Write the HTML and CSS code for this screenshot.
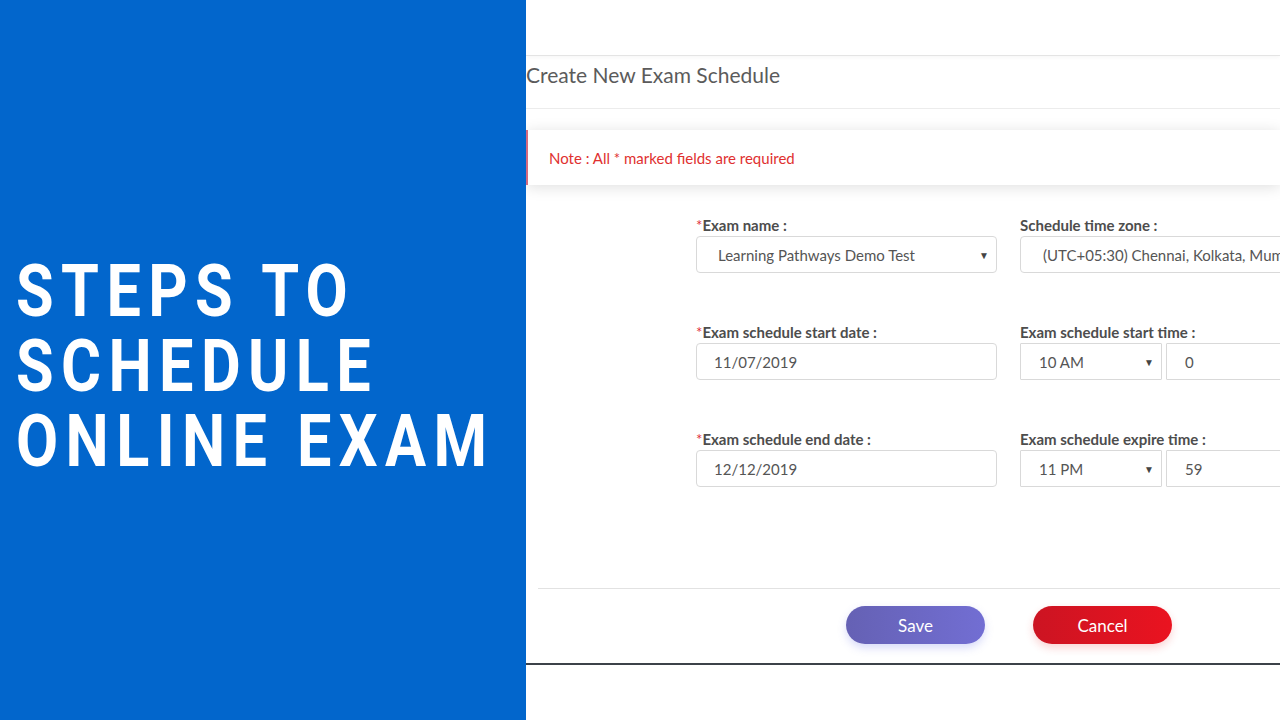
FILE: index.html
```html
<!DOCTYPE html>
<html lang="en">
<head>
<meta charset="utf-8">
<title>Steps to schedule online exam</title>
<link rel="stylesheet" href="styles.css">
</head>
<body>
<div class="page">
  <section class="intro">
    <h1 class="intro-title"><span>STEPS TO</span><span>SCHEDULE</span><span>ONLINE EXAM</span></h1>
  </section>
  <section class="app">
    <div class="screen">
      <div class="topbar"></div>
      <div class="page-head">Create New Exam Schedule</div>
      <div class="note-wrap">
        <div class="note">Note : All * marked fields are required</div>
      </div>
      <div class="form">
        <div class="field">
          <label class="label"><span class="req">*</span>Exam name :</label>
          <div class="control select rounded"><span>Learning Pathways Demo Test</span><span class="arrow">&#9660;</span></div>
        </div>
        <div class="field">
          <label class="label">Schedule time zone :</label>
          <div class="control select rounded wide"><span>(UTC+05:30) Chennai, Kolkata, Mumbai, New Delhi</span></div>
        </div>
        <div class="field">
          <label class="label"><span class="req">*</span>Exam schedule start date :</label>
          <div class="control rounded date"><span>11/07/2019</span></div>
        </div>
        <div class="field">
          <label class="label">Exam schedule start time :</label>
          <div class="time-pair">
            <div class="control select hour"><span>10 AM</span><span class="arrow">&#9660;</span></div>
            <div class="control minute"><span>0</span></div>
          </div>
        </div>
        <div class="field">
          <label class="label"><span class="req">*</span>Exam schedule end date :</label>
          <div class="control rounded date"><span>12/12/2019</span></div>
        </div>
        <div class="field">
          <label class="label">Exam schedule expire time :</label>
          <div class="time-pair">
            <div class="control select hour"><span>11 PM</span><span class="arrow">&#9660;</span></div>
            <div class="control minute"><span>59</span></div>
          </div>
        </div>
      </div>
      <div class="actions">
        <button class="btn btn-save">Save</button>
        <button class="btn btn-cancel">Cancel</button>
      </div>
    </div>
  </section>
</div>
</body>
</html>
```

FILE: styles.css
```css
* { box-sizing: border-box; }
html, body { margin: 0; padding: 0; }
body {
  width: 1280px;
  height: 720px;
  overflow: hidden;
  background: #ffffff;
  font-family: Lato, "Open Sans", Arial, sans-serif;
}
.page {
  display: flex;
  width: 1280px;
  height: 720px;
}
.intro {
  width: 526px;
  flex: none;
  background: #0266cc;
  display: flex;
  flex-direction: column;
  justify-content: center;
  padding: 13px 0 0 16px;
}
.intro-title {
  margin: 0;
  color: #ffffff;
  font-family: Roboto, "Liberation Sans", sans-serif;
  font-weight: 700;
  font-size: 72px;
  line-height: 75px;
  letter-spacing: 8.7px;
  display: flex;
  flex-direction: column;
  transform: scaleX(0.85);
  transform-origin: left center;
  white-space: nowrap;
}
.intro-title span { line-height: 75px; height: 75px; }
.app {
  flex: 1;
  min-width: 0;
  overflow: hidden;
  background: #fff;
}
.screen {
  height: 665px;
  border-bottom: 2px solid #3c4249;
  display: flex;
  flex-direction: column;
}
.topbar {
  height: 56px;
  flex: none;
  border-bottom: 1px solid #e4e4e4;
  box-shadow: 0 2px 4px rgba(0,0,0,0.03);
}
.page-head {
  height: 53px;
  flex: none;
  display: flex;
  align-items: center;
  padding-bottom: 16px;
  font-size: 21px;
  color: #5b5b5b;
  border-bottom: 1px solid #ececec;
}
.note-wrap {
  padding-top: 21px;
  flex: none;
}
.note {
  height: 55px;
  display: flex;
  align-items: center;
  padding-left: 21px;
  border-left: 2px solid #d46a80;
  background: #fff;
  color: #e0302f;
  font-size: 15px;
  box-shadow: 0 2px 14px rgba(0,0,0,0.13);
}
.form {
  flex: none;
  display: grid;
  grid-template-columns: 301px 300px;
  column-gap: 23px;
  row-gap: 49px;
  padding: 30px 0 0 170px;
}
.field {
  display: flex;
  flex-direction: column;
  gap: 1px;
}
.label {
  height: 20px;
  line-height: 20px;
  font-size: 15px;
  font-weight: 700;
  color: #4d4d4d;
  white-space: nowrap;
}
.req { color: #e0303a; font-weight: 400; }
.control {
  height: 37px;
  border: 1px solid #d9d9d9;
  background: #fff;
  display: flex;
  align-items: center;
  justify-content: space-between;
  font-size: 15px;
  color: #555;
  white-space: nowrap;
  overflow: hidden;
}
.rounded { border-radius: 4px; }
.select { padding: 0 7px 0 21px; }
.date { padding-left: 17px; }
.wide { width: 320px; padding-left: 22px; }
.arrow { font-size: 10px; color: #444; }
.time-pair {
  display: flex;
  gap: 4px;
}
.hour { width: 142px; flex: none; padding: 0 7px 0 18px; border-radius: 1px; }
.minute { width: 160px; flex: none; padding-left: 18px; border-radius: 1px; }
.actions {
  margin: 101px 0 0 12px;
  border-top: 1px solid #e2e2e2;
  padding: 17px 0 0 308px;
  display: flex;
  gap: 48px;
}
.btn {
  width: 139px;
  height: 38px;
  border: none;
  border-radius: 19px;
  color: #fff;
  font-family: Lato, "Open Sans", Arial, sans-serif;
  font-size: 17px;
  cursor: pointer;
}
.btn-save {
  background: linear-gradient(90deg, #6561b4, #726ed3);
  box-shadow: 0 4px 8px rgba(100, 110, 230, 0.25);
}
.btn-cancel {
  background: linear-gradient(90deg, #cc1422, #ea1320);
  box-shadow: 0 4px 8px rgba(230, 40, 40, 0.2);
}
```
